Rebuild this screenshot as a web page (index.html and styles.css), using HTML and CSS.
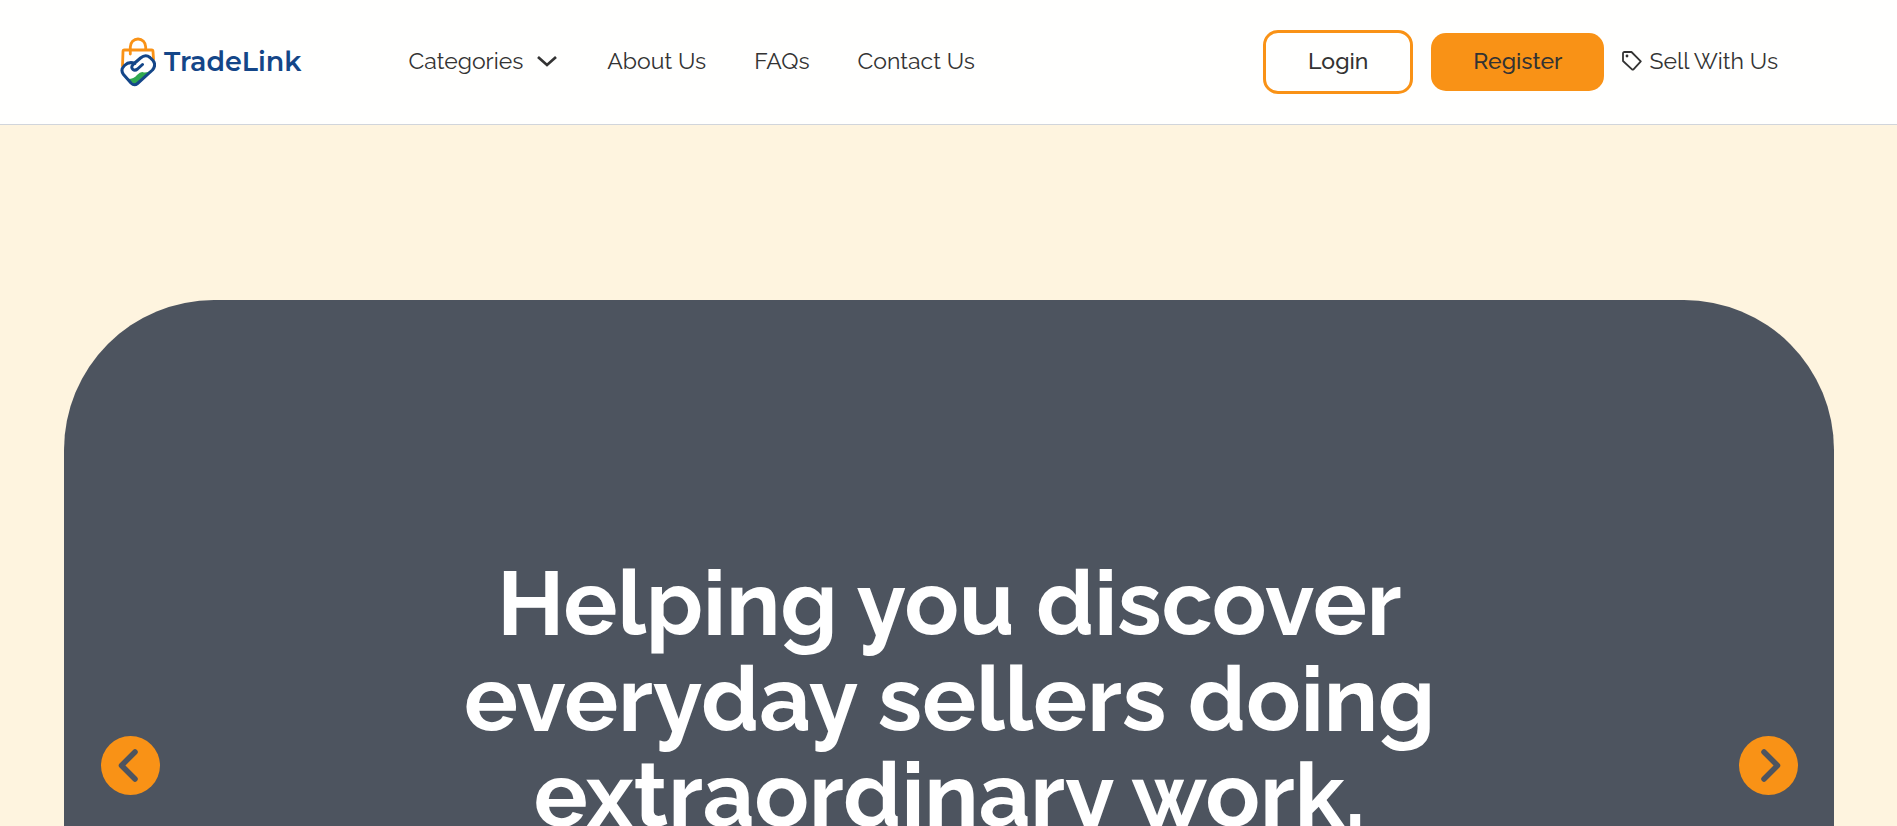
FILE: index.html
```html
<!DOCTYPE html>
<html lang="en">
<head>
<meta charset="utf-8">
<title>TradeLink</title>
<meta name="viewport" content="width=device-width, initial-scale=1">
<link rel="stylesheet" href="styles.css">
</head>
<body>
<header class="header">
  <a class="logo" href="#">
    <svg class="logo-mark" viewBox="0 0 36 50" fill="none" stroke-linecap="round" stroke-linejoin="round" aria-hidden="true">
      <path d="M8 42Q14 42 17 38Q21 34 24 35.500Q28 36 32 32L26 40L15 48Z" fill="#2fa84f"/>
      <path d="M2.500 29L3 14.500Q3 13 4.500 13H31.500Q33 13 33 14.500L33.500 22M10.300 17V10A7.700 8 0 0 1 25.700 10V12.500" stroke="#f99216" stroke-width="2.800"/>
      <path d="M15 26.500Q9 24 4.500 28.500Q0 33 3.500 37.500L11 46Q14.300 49.300 17.500 46.500L32.500 33Q36.500 28 33 23.500L30 20.500Q25.500 16.800 20.500 21L13 27.500Q10.500 30.500 13 32.500Q15 34 17.500 32L22.500 27.500" stroke="#144688" stroke-width="3"/>
    </svg>
    <span>TradeLink</span>
  </a>
  <nav class="nav" aria-label="Main">
    <button class="nav-item categories" type="button">Categories
      <svg class="chevron" viewBox="0 0 24 12" fill="none" stroke="currentColor" stroke-width="2.700" aria-hidden="true"><path d="M3 2L12 10L21 2"/></svg>
    </button>
    <a class="nav-item" href="#">About Us</a>
    <a class="nav-item" href="#">FAQs</a>
    <a class="nav-item" href="#">Contact Us</a>
  </nav>
  <div class="actions">
    <button class="button button-outline" type="button">Login</button>
    <button class="button button-solid" type="button">Register</button>
    <a class="nav-item sell" href="#">
      <svg class="tag" viewBox="0 0 20 20" fill="none" stroke="currentColor" stroke-width="1.800" stroke-linejoin="round" aria-hidden="true"><path d="M1 2.500Q1 1 2.500 1H9.500L18.800 10.300L11.500 18.300Q10.700 19 10 18.300L1 10Z"/><circle cx="5" cy="5" r="1.400" fill="currentColor" stroke="none"/></svg>
      Sell With Us
    </a>
  </div>
</header>
<main class="main">
  <section class="hero">
    <button class="arrow" type="button" aria-label="Previous slide">
      <svg viewBox="0 0 59 59" fill="none" stroke-linecap="round" stroke-linejoin="round" aria-hidden="true"><circle cx="29.500" cy="29.500" r="29.500" fill="#f99216"/><path d="M34 16L20.500 29.500L34 43" stroke="#4d545f" stroke-width="5.500"/></svg>
    </button>
    <h1 class="title">Helping you discover everyday sellers doing extraordinary work.</h1>
    <button class="arrow" type="button" aria-label="Next slide">
      <svg viewBox="0 0 59 59" fill="none" stroke-linecap="round" stroke-linejoin="round" aria-hidden="true"><circle cx="29.500" cy="29.500" r="29.500" fill="#f99216"/><path d="M25 16L38.500 29.500L25 43" stroke="#4d545f" stroke-width="5.500"/></svg>
    </button>
  </section>
</main>
</body>
</html>
```
FILE: styles.css
```css
* { box-sizing: border-box; }

body {
  margin: 0;
  height: 100vh;
  overflow: hidden;
  background: #fef4df;
  color: #333;
  font: 23px/28px Raleway, Lato, sans-serif;
}

a { color: inherit; text-decoration: none; }

button {
  border: 0;
  padding: 0;
  background: none;
  color: inherit;
  font: inherit;
  cursor: pointer;
}

.header {
  display: flex;
  align-items: center;
  padding: 30px 119px 30px 120px;
  background: #fffffe;
  border-bottom: 1px solid #d1d5db;
}

.logo {
  display: flex;
  align-items: center;
  gap: 8px;
  color: #144688;
  font: 600 27px/34px Montserrat, Inter, sans-serif;
}

.logo-mark { width: 36px; height: 50px; }

.nav {
  display: flex;
  gap: 48px;
  margin-left: 107px;
}

.nav-item { padding-bottom: 2px; }

.categories {
  display: flex;
  align-items: center;
  gap: 12px;
}

.chevron { width: 24px; height: 12px; }

.actions {
  display: flex;
  align-items: center;
  gap: 18px;
  margin-left: auto;
}

.button {
  border-radius: 15px;
  padding: 14px 42px 16px;
  font-weight: 500;
}

.button-outline { border: 3px solid #f99216; }

.button-solid { background: #f99216; }

.sell {
  display: flex;
  align-items: center;
  gap: 7px;
}

.tag { width: 20px; height: 20px; }

.main { padding: 175px 63px 0 64px; }

.hero {
  display: flex;
  align-items: center;
  justify-content: space-between;
  min-height: 930px;
  padding: 0 36px 0 37px;
  border-radius: 150px;
  background: #4d545f;
}

.title {
  align-self: flex-start;
  max-width: 1040px;
  margin: 0;
  padding-top: 255px;
  color: #fff;
  font-size: 90px;
  font-weight: 700;
  line-height: 96px;
  text-align: center;
}

.arrow {
  display: flex;
  width: 59px;
  height: 59px;
}
```
